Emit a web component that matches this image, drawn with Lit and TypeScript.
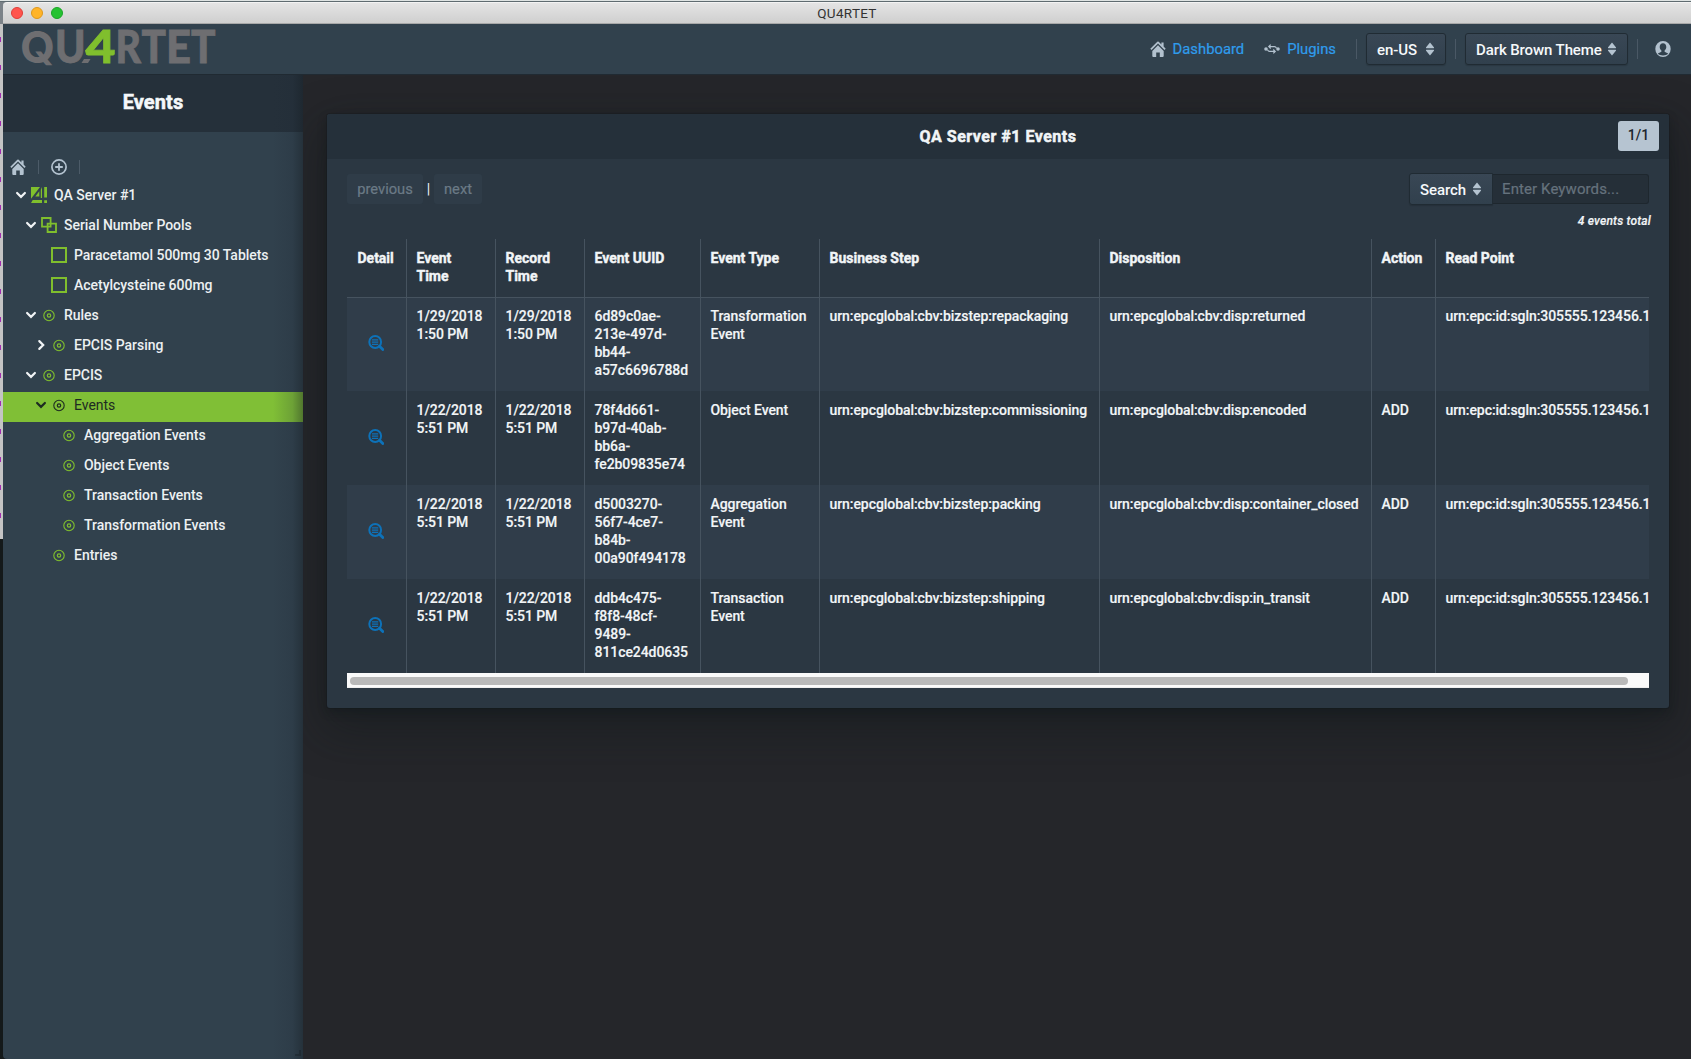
import { LitElement, html, css, svg, nothing } from "lit";
import { customElement } from "lit/decorators.js";
import { classMap } from "lit/directives/class-map.js";

interface TreeNode {
  label: string;
  depth: number;
  icon: "server" | "pools" | "box" | "ring";
  caret?: "down" | "right";
  selected?: boolean;
}

const TREE: TreeNode[] = [
  { label: "QA Server #1", depth: 0, icon: "server", caret: "down" },
  { label: "Serial Number Pools", depth: 1, icon: "pools", caret: "down" },
  { label: "Paracetamol 500mg 30 Tablets", depth: 2, icon: "box" },
  { label: "Acetylcysteine 600mg", depth: 2, icon: "box" },
  { label: "Rules", depth: 1, icon: "ring", caret: "down" },
  { label: "EPCIS Parsing", depth: 2, icon: "ring", caret: "right" },
  { label: "EPCIS", depth: 1, icon: "ring", caret: "down" },
  { label: "Events", depth: 2, icon: "ring", caret: "down", selected: true },
  { label: "Aggregation Events", depth: 3, icon: "ring" },
  { label: "Object Events", depth: 3, icon: "ring" },
  { label: "Transaction Events", depth: 3, icon: "ring" },
  { label: "Transformation Events", depth: 3, icon: "ring" },
  { label: "Entries", depth: 2, icon: "ring" },
];

const COLUMNS = ["Detail", "Event\nTime", "Record\nTime", "Event UUID", "Event Type", "Business Step", "Disposition", "Action", "Read Point"];

const READ_POINT = "urn:epc:id:sgln:305555.123456.1";
const EVENTS: string[][] = [
  ["1/29/2018\n1:50 PM", "1/29/2018\n1:50 PM", "6d89c0ae-\n213e-497d-\nbb44-\na57c6696788d", "Transformation\nEvent", "urn:epcglobal:cbv:bizstep:repackaging", "urn:epcglobal:cbv:disp:returned", "", READ_POINT],
  ["1/22/2018\n5:51 PM", "1/22/2018\n5:51 PM", "78f4d661-\nb97d-40ab-\nbb6a-\nfe2b09835e74", "Object Event", "urn:epcglobal:cbv:bizstep:commissioning", "urn:epcglobal:cbv:disp:encoded", "ADD", READ_POINT],
  ["1/22/2018\n5:51 PM", "1/22/2018\n5:51 PM", "d5003270-\n56f7-4ce7-\nb84b-\n00a90f494178", "Aggregation\nEvent", "urn:epcglobal:cbv:bizstep:packing", "urn:epcglobal:cbv:disp:container_closed", "ADD", READ_POINT],
  ["1/22/2018\n5:51 PM", "1/22/2018\n5:51 PM", "ddb4c475-\nf8f8-48cf-\n9489-\n811ce24d0635", "Transaction\nEvent", "urn:epcglobal:cbv:bizstep:shipping", "urn:epcglobal:cbv:disp:in_transit", "ADD", READ_POINT],
];

const icon = (body: unknown, size = 16) => html`<svg class="icon" width=${size} height=${size} viewBox="0 0 16 16" fill="currentColor">${body}</svg>`;

const HOME = svg`<path d="M8 4.200 2.300 9.900V15c0 .5.4.9.9.9h3v-4.500h3.600v4.500h3c.5 0 .9-.4.9-.9V9.900z"/><path d="M15.700 7.700 13.600 5.600V1.600h-2.200v1.800L8.700.8a1 1 0 0 0-1.400 0L.3 7.700l1.200 1.200L8 2.500l6.500 6.400z"/>`;
const ADD = svg`<circle cx="8" cy="8" r="7.100" fill="none" stroke="currentColor" stroke-width="1.700"/><path d="M7.100 4.200h1.800v2.900h2.900v1.800H8.900v2.900H7.100V8.900H4.200V7.100h2.900z"/>`;
const PLUGINS = svg`<circle cx="2" cy="8" r="1.800"/><circle cx="14" cy="8" r="1.800"/><path d="M5.300 5.600h5.200c1 0 1.600.8 2 1.700M10.700 10.400H5.500c-1 0-1.600-.8-2-1.700M6.700 3.700 4.800 5.600l1.900 1.900M9.300 8.500l1.900 1.900-1.900 1.900" fill="none" stroke="currentColor" stroke-width="1.200"/>`;
const USER = svg`<path fill-rule="evenodd" d="M8 0a7.700 8 0 1 1 0 16A7.700 8 0 0 1 8 0zM8 2.300C6 2.300 4.700 3.900 4.700 6c0 1.500.7 2.800 1.700 3.500v1.300c-1.300.7-2.700 1.100-3.600 1.800C4 14 6 14.500 8 14.500s4-.5 5.200-1.900c-.9-.7-2.300-1.100-3.600-1.800V9.500c1-.7 1.700-2 1.700-3.500 0-2.100-1.300-3.700-3.300-3.700z"/>`;
const SORT = svg`<path d="M8 1.600 11.900 6.200c.3.400 0 1-.5 1H4.600c-.5 0-.8-.6-.5-1zM8 14.400l3.900-4.600c.3-.4 0-1-.5-1H4.600c-.5 0-.8.6-.5 1z"/>`;
const DETAIL = svg`<circle cx="7.200" cy="7" r="5.900" fill="none" stroke="currentColor" stroke-width="2"/><path d="m11.500 11.300 3.300 3.300" fill="none" stroke="currentColor" stroke-width="2.800" stroke-linecap="round"/><path d="M4 4.200h6.200v1.200H4zM4 6.500h6.200v1.200H4zM4 8.800h6.200V10H4z"/>`;

const NODE_ICONS = {
  server: svg`<path d="M0 0h9L0 11.800zM1.700 12.900h9.300V16H0z"/><path d="M8.300 4.200v5.300H4.300zM9.800 2.700V11H11V0z"/><path d="M13.200 0H16v10.500h-2.800zM13.200 13.200H16V16h-2.800z"/>`,
  pools: svg`<path d="M1 1h8.600v8.600H1zM6.600 6.600H15V15H6.600z" fill="none" stroke="currentColor" stroke-width="1.800"/>`,
  box: svg`<path d="M1 1h14v14H1z" fill="none" stroke="currentColor" stroke-width="2"/>`,
  ring: svg`<circle cx="8" cy="8.500" r="5.200" fill="none" stroke="currentColor" stroke-width="1.100"/><circle cx="8" cy="8.500" r="1.700" fill="none" stroke="currentColor" stroke-width="1.200"/>`,
};

const CARETS = {
  down: svg`<path d="m4.100 6 3.900 3.900L11.900 6" fill="none" stroke="currentColor" stroke-width="2.200" stroke-linecap="round" />`,
  right: svg`<path d="m6.300 4.100 3.900 3.900-3.900 3.900" fill="none" stroke="currentColor" stroke-width="2.200" stroke-linecap="round"/>`,
};

const shared = css`
  * { box-sizing: border-box; }
  .icon { display: block; flex: none; }
  .select {
    display: flex; align-items: center; justify-content: space-between; height: 32px; padding: 2px 7px 0 10px;
    border: 1px solid #202b33; border-radius: 3px; color: #f5f8fa; white-space: nowrap;
    background: linear-gradient(#394755, #31404d); box-shadow: 0 1px 1px rgba(16, 22, 26, .2);
    font-weight: 500; font-size: 15px; letter-spacing: -.1px;
  }
  .select .icon { color: #b4c3d0; margin-top: -2px; }
`;

@customElement("window-bar")
class WindowBar extends LitElement {
  static styles = css`
    :host { display: flex; align-items: center; position: relative; height: 22px; padding-left: 8px; gap: 8px;
      background: linear-gradient(#e4e4e4, #cfcfcf); border-bottom: 1px solid #a8a8a8; border-top: 1px solid #f3f3f3; border-radius: 4px 0 0 0; box-sizing: border-box; }
    .dot { width: 12px; height: 12px; border-radius: 50%; box-sizing: border-box; border: 1px solid; }
    .close { background: #ff544d; border-color: #df3e38; }
    .min { background: #ffb429; border-color: #de981c; }
    .max { background: #25c231; border-color: #1aa527; }
    .title { position: absolute; left: 0; right: 0; top: 0; text-align: center; font: 13.500px/20px Roboto, sans-serif; letter-spacing: .3px; color: #333; }
  `;
  render() {
    return html`<span class="dot close"></span><span class="dot min"></span><span class="dot max"></span><span class="title">QU4RTET</span>`;
  }
}

@customElement("nav-bar")
class NavBar extends LitElement {
  static styles = [shared, css`
    :host { display: flex; align-items: center; justify-content: space-between; box-sizing: border-box; height: 51px; padding: 0 20px 0 16px; background: #31414d;
      border-bottom: 1px solid #202a32; position: relative; z-index: 3; }
    .logo { display: block; margin-top: -9px; overflow: visible; }
    .right { display: flex; align-items: center; height: 49px; }
    .icon { color: #b2c1ce; }
    .link { color: #2f9cec; margin-left: 7px; font-size: 14.800px; -webkit-text-stroke: .2px #2f9cec; }
    .second { margin-left: 20px; }
    .rule { width: 1px; height: 20px; background: #4a5865; }
    .rule.a { margin-left: 20px; }
    .rule.b { margin-right: 17px; }
    .locale { width: 80px; margin: 0 9px; }
    .theme { width: 163px; margin: 0 9px; }
  `];
  render() {
    return html`
      <svg class="logo" width="202" height="56" viewBox="-1 0 202 56" font-family="Lato, sans-serif" font-weight="900" font-size="46" fill="#6e6e71" stroke="#6e6e71" stroke-width=".8">
        <text x="0" y="46" textLength="35" lengthAdjust="spacingAndGlyphs" font-family="Inter, sans-serif" font-weight="700" font-size="44.500" stroke="none">Q</text>
        <text x="35" y="46" textLength="30.500" lengthAdjust="spacingAndGlyphs">U</text>
        <path d="M64 42h6.500l-2.500 4H61.500z" stroke="none"/>
        <text x="65.500" y="46" textLength="30" lengthAdjust="spacingAndGlyphs" fill="#80bf2d" stroke="#80bf2d">4</text>
        <text x="95.500" y="46" textLength="25.500" lengthAdjust="spacingAndGlyphs">R</text>
        <text x="121.500" y="46" textLength="24.500" lengthAdjust="spacingAndGlyphs">T</text>
        <text x="146" y="46" textLength="25" lengthAdjust="spacingAndGlyphs">E</text>
        <text x="171" y="46" textLength="24.500" lengthAdjust="spacingAndGlyphs">T</text>
      </svg>
      <div class="right">
        ${icon(HOME)}<span class="link">Dashboard</span>
        <span class="second">${icon(PLUGINS)}</span><span class="link">Plugins</span>
        <span class="rule a"></span>
        <div class="select locale">en-US ${icon(SORT)}</div>
        <span class="rule"></span>
        <div class="select theme">Dark Brown Theme ${icon(SORT)}</div>
        <span class="rule b"></span>
        ${icon(USER)}
      </div>`;
  }
}

@customElement("side-tree")
class SideTree extends LitElement {
  static styles = [shared, css`
    :host { display: flex; flex-direction: column; position: relative; width: 300px; flex: none; background: #31414d; border-bottom-left-radius: 4px; }
    :host::after { content: ""; position: absolute; inset: 0 0 0 auto; width: 30px; pointer-events: none;
      background: linear-gradient(to right, rgba(32, 43, 60, 0), rgba(32, 43, 55, .2) 65%, rgba(22, 30, 36, .45)); }
    .head { height: 57px; background: #25303a; color: #f5f8fa; font-size: 20px; font-weight: 700; letter-spacing: .1px; text-align: center; line-height: 54px; -webkit-text-stroke: .5px #f5f8fa; }
    .tools { display: flex; align-items: center; gap: 12px; height: 18px; margin: 26px 0 6px 7px; color: #b4c3d0; }
    .rule { width: 1px; height: 14px; background: #4c5b68; }
    .row { display: flex; align-items: center; height: 30px; padding-bottom: 4px; color: #ecf0f2; }
    .row .icon { color: #80bf2d; }
    .row .caret { color: #f0f3f5; width: 16px; margin-right: 2px; }
    .caret svg { display: block; }
    .label { margin-left: 7px; font-weight: 500; letter-spacing: -.03px; }
    .row.selected { background: #80bf36; color: #1d2b22; }
    .row.selected .icon, .row.selected .caret { color: #1d2b22; }
    .selected .label { font-weight: 400; }
    .grip { position: absolute; right: 2px; bottom: 3px; width: 6px; height: 6px; border: solid #26323b; border-width: 0 2px 2px 0; }
  `];
  render() {
    return html`
      <div class="head">Events</div>
      <div class="tools">${icon(HOME)}<span class="rule"></span>${icon(ADD)}<span class="rule"></span></div>
      ${TREE.map((n) => html`
        <div class=${classMap({ row: true, selected: !!n.selected })} style="padding-left:${10 + n.depth * 10}px">
          <span class="caret">${n.caret ? html`<svg width="16" height="16" viewBox="0 0 16 16">${CARETS[n.caret]}</svg>` : nothing}</span>
          ${icon(NODE_ICONS[n.icon])}<span class="label">${n.label}</span>
        </div>`)}
      <span class="grip"></span>`;
  }
}

@customElement("events-card")
class EventsCard extends LitElement {
  static styles = [shared, css`
    :host { display: block; width: 1342px; height: 594px; background: #2b3742; border-radius: 3px; color: #f2f5f7;
      box-shadow: 0 0 0 1px rgba(16, 22, 26, .2), 0 4px 8px rgba(16, 22, 26, .4), 0 18px 46px 6px rgba(16, 22, 26, .4); }
    .head { display: grid; grid-template-columns: 1fr auto 1fr; align-items: center; height: 45px; padding-right: 10px; background: #25303a; border-radius: 3px 3px 0 0; }
    .title { grid-column: 2; font-size: 16px; font-weight: 700; letter-spacing: .5px; margin-left: 10px; -webkit-text-stroke: .5px #f2f5f7; }
    .tag { justify-self: end; margin-top: -1px; width: 41px; height: 30px; border-radius: 3px; background: #b6c4d1; color: #1c262e; text-align: center; line-height: 29px; font-weight: 500; }
    .bar { display: flex; align-items: center; height: 30px; margin: 15px 20px 0; }
    .page { width: 76px; height: 30px; line-height: 30px; text-align: center; border-radius: 3px; background: #2f3c48; color: #6b7a86; font-size: 14.700px; -webkit-text-stroke: .2px #6b7a86; }
    .page.next { width: 48px; }
    .sep { width: 11px; text-align: center; }
    .search { display: flex; align-items: center; margin-left: auto; }
    .search .select { width: 84px; height: 32px; border-radius: 3px 0 0 3px; }
    .input { width: 156px; height: 30px; line-height: 28px; padding-left: 9px; border: 1px solid #1e272e; border-left: 0; border-radius: 0 3px 3px 0; background: #252f38; color: #65727d; font-size: 15px; letter-spacing: .1px; -webkit-text-stroke: .2px #65727d; }
    .total { height: 18px; margin: 8px 18px 9px; text-align: right; font-size: 12px; line-height: 18px; font-style: italic; font-weight: 500; letter-spacing: .2px; -webkit-text-stroke: .2px #f2f5f7; }
    .scroller { width: 1302px; margin-left: 20px; overflow: hidden; }
    .grid { display: grid; grid-template-columns: 59px 89px 89px 116px 119px 280px 272px 64px 214px; }
    .cell { padding: 10px 0 12px 10.500px; line-height: 18px; white-space: pre; box-shadow: inset 1px 0 #46535f; font-weight: 500; letter-spacing: -.07px; -webkit-text-stroke: .15px #f2f5f7; }
    .cell:first-child { box-shadow: none; }
    .header .cell { height: 58px; font-weight: 700; letter-spacing: -.01px; -webkit-text-stroke: .4px #f2f5f7; }
    .line { height: 94px; box-shadow: none; }
    .odd { background: #303d4a; }
    .first { box-shadow: inset 0 1px #46535f; }
    .cell.detail { display: flex; align-items: center; color: #0d72b9; padding-left: 21px; }
    .track { height: 15px; padding: 4px 21px 3px 3px; background: #fafafa; border-bottom: 1px solid #eee; }
    .thumb { height: 8px; border-radius: 4px; background: #b9b9b9; }
  `];
  render() {
    return html`
      <div class="head"><span class="title">QA Server #1 Events</span><span class="tag">1/1</span></div>
      <div class="bar">
        <span class="page">previous</span><span class="sep">|</span><span class="page next">next</span>
        <div class="search"><div class="select">Search ${icon(SORT)}</div><div class="input">Enter Keywords...</div></div>
      </div>
      <div class="total">4 events total</div>
      <div class="scroller">
        <div class="grid header">${COLUMNS.map((c) => html`<div class="cell">${c}</div>`)}</div>
        ${EVENTS.map((row, i) => html`
          <div class=${classMap({ grid: true, line: true, odd: i % 2 === 0, first: i === 0 })}>
            <div class="cell detail">${icon(DETAIL)}</div>
            ${row.map((value) => html`<div class="cell">${value}</div>`)}
          </div>`)}
        <div class="track"><div class="thumb"></div></div>
      </div>`;
  }
}

@customElement("app-root")
class AppRoot extends LitElement {
  static styles = css`
    :host { display: block; box-sizing: border-box; width: 1691px; height: 1059px; padding: 2px 0 0 3px; overflow: hidden;
      font: 14px/18px Roboto, sans-serif;
      background:
        linear-gradient(#dfe4e3 0 1px, #5f6b70 1px 2px, #7b8288 2px 24px, transparent 24px 539px, #14191a 539px),
        linear-gradient(#a02bb0 0 5px, transparent 5px) 0 9px / 1px 28px repeat-y,
        #c4c4c4; }
    .window { display: flex; flex-direction: column; height: 1057px; }
    .body { display: flex; flex: 1; min-height: 0; }
    .main { flex: 1; padding: 39px 0 0 24px; background: #25262a; overflow: hidden; }
  `;
  render() {
    return html`
      <div class="window">
        <window-bar></window-bar>
        <nav-bar></nav-bar>
        <div class="body">
          <side-tree></side-tree>
          <div class="main"><events-card></events-card></div>
        </div>
      </div>`;
  }
}
